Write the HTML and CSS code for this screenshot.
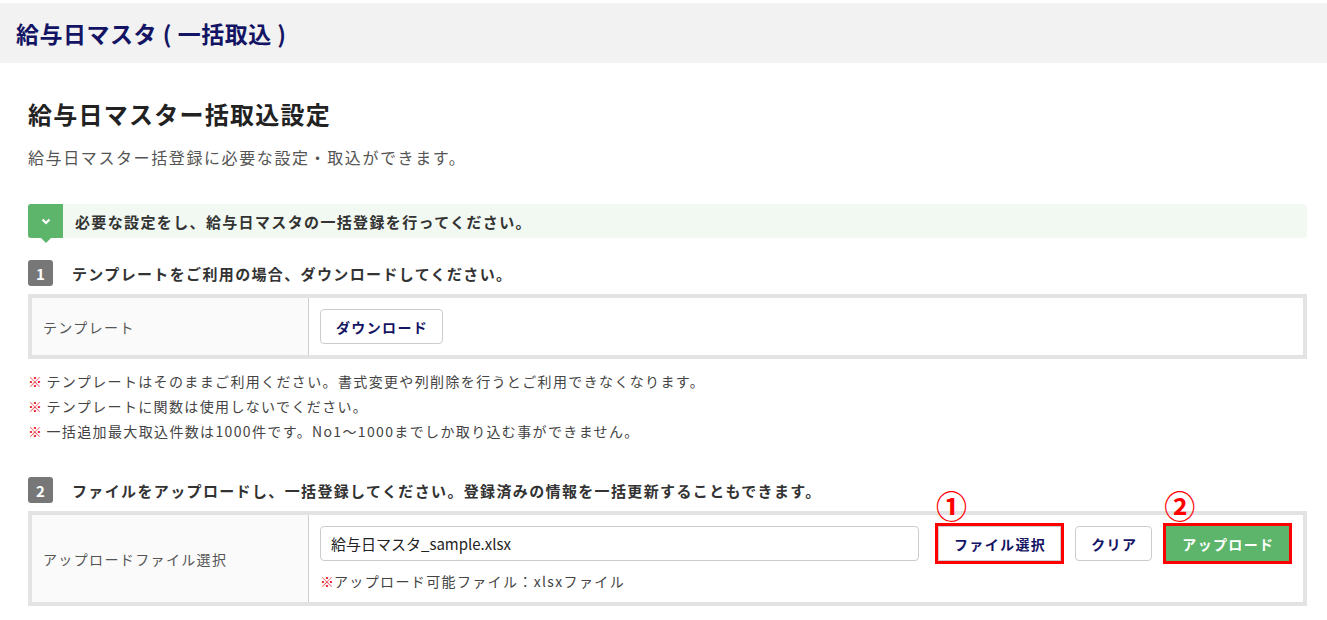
FILE: index.html
```html
<!DOCTYPE html>
<html>
<head>
	<meta charset="UTF-8">
	<title>給与日マスタ ( 一括取込 )</title>
	<link rel="stylesheet" href="styles.css">
</head>
<body>

<div class="page-header">
	<h1>給与日マスタ ( 一括取込 )</h1>
</div>

<div class="content">
	<h2>給与日マスター括取込設定</h2>
	<p class="lead">給与日マスター括登録に必要な設定・取込ができます。</p>

	<div class="notice">
		<div class="notice-icon">
			<svg width="14" height="14" viewBox="0 0 14 14"><polyline points="3.5,5.5 7,9 10.5,5.5" fill="none" stroke="#fff" stroke-width="2.2"/></svg>
		</div>
		<div class="notice-text">必要な設定をし、給与日マスタの一括登録を行ってください。</div>
	</div>

	<div class="step">
		<span class="step-no">1</span>
		<span class="step-text">テンプレートをご利用の場合、ダウンロードしてください。</span>
	</div>
	<div class="form-table">
		<div class="form-label">テンプレート</div>
		<div class="form-value">
			<div class="button">ダウンロード</div>
		</div>
	</div>
	<ul class="notes">
		<li><span class="mark">※</span> テンプレートはそのままご利用ください。書式変更や列削除を行うとご利用できなくなります。</li>
		<li><span class="mark">※</span> テンプレートに関数は使用しないでください。</li>
		<li><span class="mark">※</span> 一括追加最大取込件数は1000件です。No1～1000までしか取り込む事ができません。</li>
	</ul>

	<div class="step step-2">
		<span class="step-no">2</span>
		<span class="step-text">ファイルをアップロードし、一括登録してください。登録済みの情報を一括更新することもできます。</span>
	</div>
	<div class="form-table">
		<div class="form-label">アップロードファイル選択</div>
		<div class="form-value">
			<div class="upload-row">
				<div class="file-input">給与日マスタ_sample.xlsx</div>
				<div class="marked">
					<span class="callout">①</span>
					<div class="button">ファイル選択</div>
				</div>
				<div class="button">クリア</div>
				<div class="marked">
					<span class="callout">②</span>
					<div class="button button-green">アップロード</div>
				</div>
			</div>
			<div class="file-note"><span class="mark">※</span>アップロード可能ファイル：xlsxファイル</div>
		</div>
	</div>
</div>

</body>
</html>
```

FILE: styles.css
```css
body{
	margin: 0;
	font-family: "Noto Sans CJK JP", "Noto Sans", sans-serif;
	color: #333;
	background-color: #fff;
	letter-spacing: 0.085em;
}

.page-header{
	margin-top: 3px;
	height: 60px;
	padding-left: 16px;
	display: flex;
	align-items: center;
	background-color: #f2f2f2;
}
.page-header h1{
	margin: 0;
	font-size: 23px;
	line-height: 30px;
	font-weight: bold;
	color: #141464;
	letter-spacing: 0.5px;
}

.content{
	padding: 0 20px 40px 28px;
}

h2{
	margin: 35px 0 0 0;
	font-size: 24px;
	line-height: 32px;
	font-weight: bold;
	color: #222;
	letter-spacing: 1.25px;
}
.lead{
	margin: 15px 0 0 0;
	font-size: 16px;
	line-height: 24px;
	color: #555;
	letter-spacing: 0.1em;
}

.notice{
	margin-top: 35px;
	height: 34px;
	display: flex;
	align-items: center;
	background-color: #f2f9f2;
	border-radius: 0 4px 4px 0;
}
.notice-icon{
	position: relative;
	width: 35px;
	height: 34px;
	display: flex;
	align-items: center;
	justify-content: center;
	background-color: #5cb56a;
	border-radius: 3px 0 0 3px;
}
.notice-icon::after{
	content: "";
	position: absolute;
	left: 13px;
	bottom: -5px;
	border-top: 5px solid #5cb56a;
	border-left: 5px solid transparent;
	border-right: 5px solid transparent;
}
.notice-text{
	margin-left: 12px;
	font-size: 15px;
	font-weight: bold;
	color: #333;
}

.step{
	margin-top: 22px;
	height: 26px;
	display: flex;
	align-items: center;
}
.step-2{
	margin-top: 33px;
}
.step-no{
	width: 25px;
	height: 26px;
	display: flex;
	align-items: center;
	justify-content: center;
	background-color: #777;
	border-radius: 3px;
	color: #fff;
	font-size: 15px;
	font-weight: bold;
	letter-spacing: 0;
}
.step-text{
	margin-left: 19px;
	font-size: 15px;
	font-weight: bold;
	color: #333;
}

.form-table{
	margin-top: 8px;
	display: flex;
	border: 4px solid #e3e3e3;
	background-color: #fff;
}
.form-label{
	width: 265px;
	padding-left: 11px;
	display: flex;
	align-items: center;
	background-color: #fafafa;
	border-right: 1px solid #cfcfcf;
	font-size: 14px;
	color: #555;
}
.form-value{
	flex: 1;
	padding: 11px;
}

.button{
	display: inline-flex;
	flex-shrink: 0;
	align-items: center;
	justify-content: center;
	box-sizing: border-box;
	height: 35px;
	padding: 0 14px 0 15px;
	background-color: #fff;
	border: 1px solid #ccc;
	border-radius: 4px;
	color: #141464;
	font-size: 14px;
	font-weight: bold;
	white-space: nowrap;
}
.button-green{
	background-color: #5cb56a;
	border-color: #5cb56a;
	color: #fff;
}

.notes{
	margin: 10px 0 0 0;
	padding: 0;
	list-style: none;
	font-size: 14px;
	line-height: 25px;
	color: #444;
}
.mark{
	color: #e60012;
	letter-spacing: 0;
}

.upload-row{
	display: flex;
	align-items: center;
	gap: 14px;
}
.file-input{
	width: 599px;
	flex-shrink: 0;
	box-sizing: border-box;
	height: 35px;
	margin-right: 5px;
	padding-left: 10px;
	display: flex;
	align-items: center;
	border: 1px solid #ccc;
	border-radius: 4px;
	font-size: 15px;
	color: #222;
	letter-spacing: 0;
}
.file-note{
	margin-top: 10px;
	line-height: 20px;
	font-size: 14px;
	color: #444;
}

.marked{
	position: relative;
	display: flex;
	flex-shrink: 0;
	outline: 3px solid #ff0000;
}
.marked .button{
	border-radius: 0;
}
.callout{
	position: absolute;
	left: -2px;
	top: -38px;
	font-size: 31px;
	line-height: 34px;
	font-weight: bold;
	color: #ff0000;
	letter-spacing: 0;
}
```
